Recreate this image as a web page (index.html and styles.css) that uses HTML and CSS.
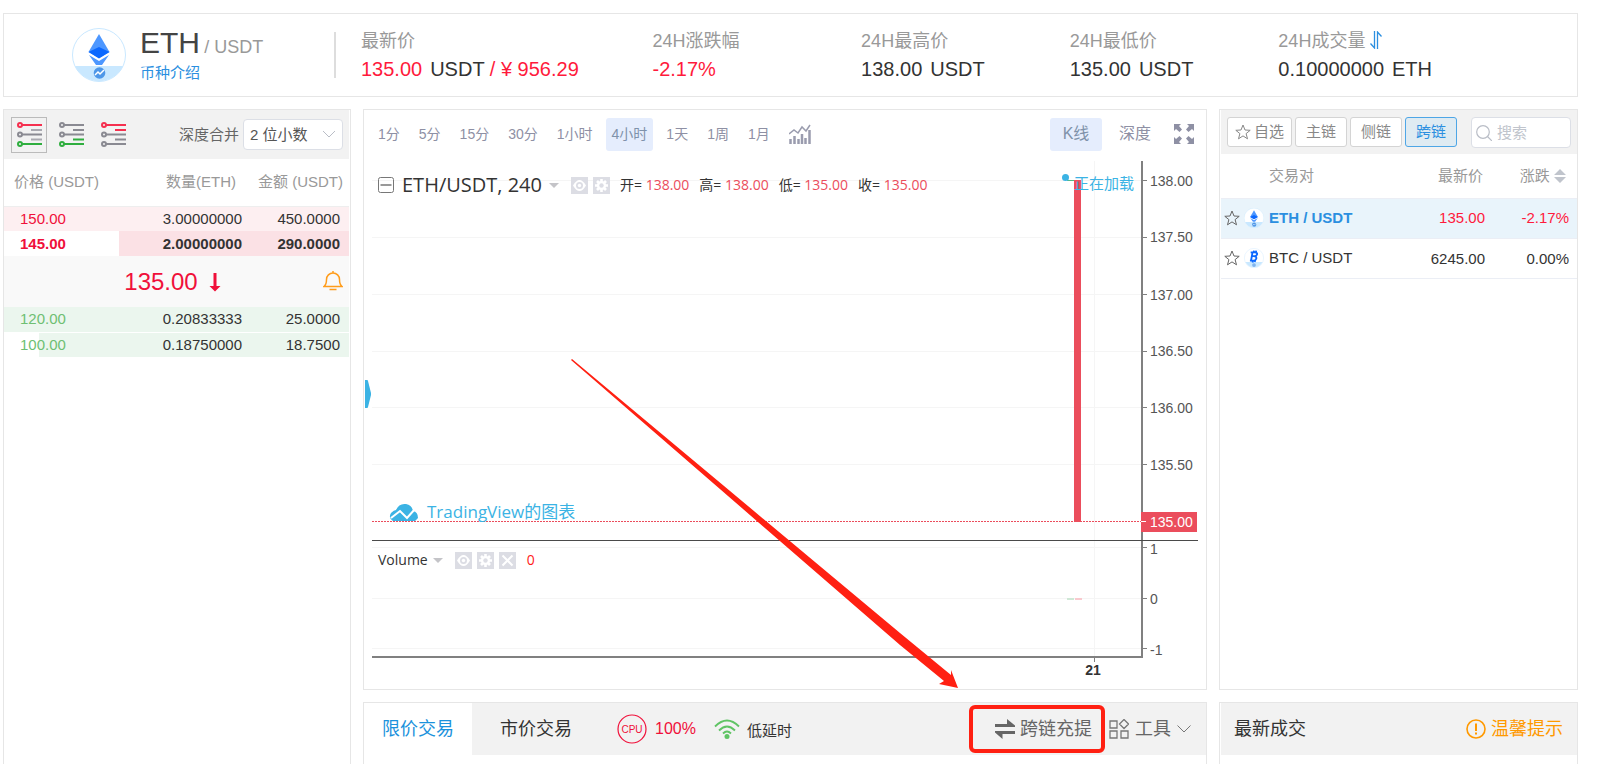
FILE: index.html
```html
<!DOCTYPE html>
<html lang="zh-CN">
<head>
    <meta charset="UTF-8">
    <meta name="viewport" content="width=device-width, initial-scale=1.0">
    <title>ETH / USDT</title>
    <link rel="stylesheet" href="styles.css">
</head>
<body>
    <!-- Shared shapes -->
    <svg class="sprite" aria-hidden="true">
        <symbol id="star" viewBox="0 0 16 16">
            <path d="M8 1l2 5 5.200.3-4.100 3.300 1.400 5.200L8 11.900l-4.500 2.900 1.400-5.200L.8 6.300 6 6z" fill="none" stroke="currentColor" stroke-linejoin="round"/>
        </symbol>
        <symbol id="eth" viewBox="0 0 54 54">
            <circle cx="27" cy="27" r="26.500" fill="#fff"/>
            <path d="M3 38h48a26.500 26.500 0 0 1-48 0z" fill="#c9e8ff"/>
            <circle cx="27" cy="27" r="26.500" fill="none" stroke="#c9e8ff"/>
            <path d="M27 6l10.500 18L27 30 16.500 24z" fill="#4d97ff"/>
            <path d="M27 19l10.500 5L27 30.500 16.500 24z" fill="#0b68ff"/>
            <path d="M17 27l10 6 10-6-7 10h-6z" fill="#4d97ff"/>
            <circle cx="27.500" cy="45" r="5.800" fill="#4e97e8"/>
            <path d="M23 47l3-3 2 2 4-4" fill="none" stroke="#fff" stroke-width="1.500"/>
        </symbol>
        <symbol id="btc" viewBox="0 0 54 54">
            <circle cx="27" cy="27" r="26" fill="#fff"/>
            <path d="M3 38h48a26.500 26.500 0 0 1-48 0z" fill="#c9e8ff"/>
            <circle cx="27" cy="27" r="26" fill="none" stroke="#e2f2ff" stroke-width="2"/>
            <path d="M23 12l-4 22M18 12h12q7 1 5 6t-8 4q8 1 6 7t-9 5H16M21 22h9M27 7l-1 5M33 7l-1 5M24 34l-1 5M30 34l-1 4" fill="none" stroke="#0b68ff" stroke-width="5"/>
            <circle cx="27" cy="46" r="5" fill="#7fb4ee"/>
        </symbol>
        <symbol id="eye" viewBox="0 0 17 17">
            <path d="M0 0h17v17H0z" fill="#dcdde4"/>
            <path d="M2 8.500q6.500-11 13 0q-6.500 11-13 0z" fill="#fff"/>
            <circle cx="8.500" cy="8.500" r="3.500" fill="#dcdde4"/>
            <circle cx="8.500" cy="8.500" r="1.700" fill="#fff"/>
        </symbol>
        <symbol id="gear" viewBox="0 0 17 17">
            <path d="M0 0h17v17H0z" fill="#dcdde4"/>
            <path d="M8.500 2v13M2 8.500h13M4 4l9 9M13 4l-9 9" stroke="#fff" stroke-width="2.600"/>
            <circle cx="8.500" cy="8.500" r="4.600" fill="#fff"/>
            <circle cx="8.500" cy="8.500" r="2.200" fill="#dcdde4"/>
        </symbol>
        <symbol id="cross" viewBox="0 0 17 17">
            <path d="M0 0h17v17H0z" fill="#dcdde4"/>
            <path d="M3.500 3.500l10 10M13.500 3.500l-10 10" stroke="#fff" stroke-width="2"/>
        </symbol>
    </svg>

    <div class="app">
        <header class="summary">
            <div class="coin">
                <svg class="coin-logo"><use href="#eth"/></svg>
                <div class="coin-text">
                    <h1 class="coin-name">ETH <small>/ USDT</small></h1>
                    <a class="coin-link" href="#">币种介绍</a>
                </div>
            </div>
            <dl class="stats">
                <div>
                    <dt>最新价</dt>
                    <dd><span class="red">135.00</span><span class="unit">USDT</span> <span class="red">/ ¥ 956.29</span></dd>
                </div>
                <div>
                    <dt>24H涨跌幅</dt>
                    <dd class="red">-2.17%</dd>
                </div>
                <div>
                    <dt>24H最高价</dt>
                    <dd>138.00<span class="unit">USDT</span></dd>
                </div>
                <div>
                    <dt>24H最低价</dt>
                    <dd>135.00<span class="unit">USDT</span></dd>
                </div>
                <div>
                    <dt>24H成交量
                        <svg class="swap-v" viewBox="0 0 12 18"><path d="M4.500 0v17L.5 12.500M7.500 18V1l4 4.500" fill="none" stroke="#2b8fe0" stroke-width="1.300"/></svg>
                    </dt>
                    <dd>0.10000000<span class="unit">ETH</span></dd>
                </div>
            </dl>
        </header>

        <main class="board">
            <section class="panel book">
                <div class="book-bar">
                    <button class="view active" aria-label="买卖盘">
                        <svg viewBox="0 0 25 25" fill="none" stroke-width="2">
                            <g stroke="#f5304f"><circle cx="3" cy="3" r="2"/><path d="M5 3h20"/></g>
                            <g stroke="#8a8a92"><circle cx="3" cy="12.500" r="2"/><path d="M5 12.500h20"/></g>
                            <path d="M14 8h11M14 17.500h11" stroke="#a9a9b0"/>
                            <g stroke="#2fae3f"><circle cx="3" cy="22" r="2"/><path d="M5 22h20"/></g>
                        </svg>
                    </button>
                    <button class="view" aria-label="买盘">
                        <svg viewBox="0 0 25 25" fill="none" stroke-width="2">
                            <g stroke="#8a8a92"><circle cx="3" cy="3" r="2"/><path d="M5 3h20M14 8h11"/><circle cx="3" cy="12.500" r="2"/><path d="M5 12.500h20"/></g>
                            <g stroke="#2fae3f"><circle cx="3" cy="22" r="2"/><path d="M5 22h20M14 17.500h11"/></g>
                        </svg>
                    </button>
                    <button class="view" aria-label="卖盘">
                        <svg viewBox="0 0 25 25" fill="none" stroke-width="2">
                            <g stroke="#f5304f"><circle cx="3" cy="3" r="2"/><path d="M5 3h20M14 8h11"/></g>
                            <g stroke="#8a8a92"><circle cx="3" cy="12.500" r="2"/><path d="M5 12.500h20M14 17.500h11"/><circle cx="3" cy="22" r="2"/><path d="M5 22h20"/></g>
                        </svg>
                    </button>
                    <label class="merge-label" for="merge">深度合并</label>
                    <div class="select-wrap">
                        <select id="merge">
                            <option>2 位小数</option>
                            <option>1 位小数</option>
                        </select>
                        <svg viewBox="0 0 12 8"><path d="M0 1l6 6 6-6" fill="none" stroke="#b9bdc6"/></svg>
                    </div>
                </div>
                <table class="orders">
                    <thead>
                        <tr><th>价格 (USDT)</th><th>数量(ETH)</th><th>金额 (USDT)</th></tr>
                    </thead>
                    <tbody class="asks">
                        <tr style="--depth: 100%"><td>150.00</td><td>3.00000000</td><td>450.0000</td></tr>
                        <tr class="mine" style="--depth: 66.700%"><td>145.00</td><td>2.00000000</td><td>290.0000</td></tr>
                    </tbody>
                </table>
                <div class="last">
                    <span>135.00</span>
                    <svg class="last-arrow" viewBox="0 0 12 20"><path d="M4.500 1h3v13h4L6 19.500.5 14h4z" fill="#f0103a"/></svg>
                    <button class="bell" aria-label="价格提醒">
                        <svg viewBox="0 0 20 20" fill="none" stroke="#ff9c1a" stroke-width="1.500"><path d="M1 15.500q2.500-2 2.500-7a6.500 6.500 0 0 1 13 0q0 5 2.500 7zM6.500 18.500h7M10 0v2"/></svg>
                    </button>
                </div>
                <table class="orders">
                    <tbody class="bids">
                        <tr style="--depth: 100%"><td>120.00</td><td>0.20833333</td><td>25.0000</td></tr>
                        <tr style="--depth: 90%"><td>100.00</td><td>0.18750000</td><td>18.7500</td></tr>
                    </tbody>
                </table>
            </section>

            <section class="panel chart">
                <div class="chart-bar">
                    <button>1分</button>
                    <button>5分</button>
                    <button>15分</button>
                    <button>30分</button>
                    <button>1小时</button>
                    <button class="active">4小时</button>
                    <button>1天</button>
                    <button>1周</button>
                    <button>1月</button>
                    <button aria-label="指标">
                        <svg class="indicator" viewBox="0 0 22 20"><path d="M1.500 20v-5M5.500 20v-8M9.500 20v-5M13 20V10M16.500 20v-6M20.500 20V6" stroke="#9a9cae" stroke-width="2.500"/><path d="M0 10l5-4 4 3 4-6 4 4 4-6" fill="none" stroke="#9a9cae" stroke-width="1.500"/></svg>
                    </button>
                    <button class="kind active first">K线</button>
                    <button class="kind">深度</button>
                    <button class="full" aria-label="全屏">
                        <svg viewBox="0 0 20 20" fill="#8e90a4"><path d="M0 0h7L5 2l3 3.500L5.500 8 2 5 0 7zM20 0v7l-2-2-3.500 3L12 5.500 15 2l-2-2zM0 20v-7l2 2 3.500-3L8 14.500 5 18l2 2zM20 20h-7l2-2-3-3.500 2.500-2.500 3.500 3 2-2z"/></svg>
                    </button>
                </div>
                <div class="plot">
                    <svg class="plot-svg" viewBox="0 0 842 531">
                        <path class="grid" d="M8 22.500h769M8 79.500h769M8 136.500h769M8 193.500h769M8 249.500h769M8 306.500h769M8 389.500h769M8 440.500h769M8 490.500h769M730.500 3v495"/>
                        <path class="grid-last" d="M8 363.500h769"/>
                        <path d="M1 222h2q1 0 1 1l3 12v2l-3 12q0 1-1 1H1z" fill="#3bb3e4"/>
                        <path d="M703 22.500h8" stroke="#53b987"/>
                        <path d="M710 22h7v342h-7z" fill="#eb4d5c"/>
                        <path d="M703 440h7v2h-7z" fill="#cfe8d6"/>
                        <path d="M711 440h7v2h-7z" fill="#f9c9ce"/>
                        <circle cx="701.500" cy="19.500" r="3.500" fill="#3bb3e4"/>
                        <text class="loading" x="710" y="31">正在加载</text>
                        <path class="axis" d="M778 3v497M8 499h771"/>
                        <path class="marks" d="M778 22.500h5M778 79.500h5M778 136.500h5M778 193.500h5M778 249.500h5M778 306.500h5M778 389.500h5M778 440.500h5M778 490.500h5M730.500 499v5"/>
                        <path d="M8 382.500h826" stroke="#4a4a4a"/>
                        <path d="M777 354h56v20h-56z" fill="#eb4d5c"/>
                        <path d="M777 363.500h5" stroke="#fff"/>
                        <g class="ticks">
                            <text x="786" y="28">138.00</text>
                            <text x="786" y="84">137.50</text>
                            <text x="786" y="142">137.00</text>
                            <text x="786" y="198">136.50</text>
                            <text x="786" y="255">136.00</text>
                            <text x="786" y="312">135.50</text>
                            <text x="786" y="369" fill="#fff">135.00</text>
                            <text x="786" y="396">1</text>
                            <text x="786" y="446">0</text>
                            <text x="786" y="497">-1</text>
                            <text class="day" x="729" y="517">21</text>
                        </g>
                        <!-- TradingView mark -->
                        <path d="M29 363q-5-3-2-8 3-3 5-3 3-7 10-6 6 1 7 7 5 1 5 7l-3 3z" fill="#3bb3e4"/>
                        <path d="M27 360l9-7 7 7 8-9" fill="none" stroke="#fff" stroke-width="2"/>
                        <text class="brand" x="63" y="360">TradingView的图表</text>
                    </svg>
                    <div class="legend">
                        <svg class="collapse" viewBox="0 0 16 16"><rect x=".5" y=".5" width="15" height="15" rx="2" fill="none" stroke="#777"/><path d="M2.500 8h11" stroke="#999" stroke-width="2"/></svg>
                        <strong>ETH/USDT, 240</strong>
                        <i class="caret"></i>
                        <svg class="tool"><use href="#eye"/></svg>
                        <svg class="tool"><use href="#gear"/></svg>
                        <span class="ohlc">开= <b>138.00</b></span>
                        <span class="ohlc">高= <b>138.00</b></span>
                        <span class="ohlc">低= <b>135.00</b></span>
                        <span class="ohlc">收= <b>135.00</b></span>
                    </div>
                    <div class="legend volume">
                        <span>Volume</span>
                        <i class="caret"></i>
                        <svg class="tool"><use href="#eye"/></svg>
                        <svg class="tool"><use href="#gear"/></svg>
                        <svg class="tool"><use href="#cross"/></svg>
                        <span class="zero">0</span>
                    </div>
                </div>
            </section>

            <section class="panel market">
                <div class="market-bar">
                    <button class="fav"><svg><use href="#star"/></svg>自选</button>
                    <button>主链</button>
                    <button>侧链</button>
                    <button class="active">跨链</button>
                    <div class="search">
                        <svg viewBox="0 0 16 16" fill="none" stroke="#b9bdc6" stroke-width="1.200"><circle cx="7" cy="7" r="6.300"/><path d="M11.500 11.500L16 16"/></svg>
                        <input type="text" aria-label="搜索" placeholder="搜索">
                    </div>
                </div>
                <table class="pairs">
                    <thead>
                        <tr>
                            <th>交易对</th>
                            <th>最新价</th>
                            <th>涨跌 <svg class="sort" viewBox="0 0 12 14"><path d="M6 0l6 6H0zM6 14l6-6H0z" fill="#c0c4cc"/></svg></th>
                        </tr>
                    </thead>
                    <tbody>
                        <tr class="current">
                            <td><svg class="star"><use href="#star"/></svg><svg class="mini"><use href="#eth"/></svg><a href="#">ETH / USDT</a></td>
                            <td class="red">135.00</td>
                            <td class="red">-2.17%</td>
                        </tr>
                        <tr>
                            <td><svg class="star"><use href="#star"/></svg><svg class="mini"><use href="#btc"/></svg><a href="#">BTC / USDT</a></td>
                            <td>6245.00</td>
                            <td>0.00%</td>
                        </tr>
                    </tbody>
                </table>
            </section>

            <section class="panel open trade">
                <div class="foot-bar">
                    <button class="tab active">限价交易</button>
                    <button class="tab">市价交易</button>
                    <svg class="cpu" viewBox="0 0 30 30"><circle cx="15" cy="15" r="14" fill="none" stroke="#f0103a" stroke-width="1.200"/><text x="15" y="19">CPU</text></svg>
                    <span class="load">100%</span>
                    <svg class="wifi" viewBox="0 0 26 20"><path d="M1 7.500q12-12 24 0M5 11.500q8-8 16 0M9 14.500q4-4 8 0" fill="none" stroke="#5fc464" stroke-width="1.800"/><circle cx="13" cy="17.500" r="2.500" fill="#5fc464"/></svg>
                    <span class="delay">低延时</span>
                    <button class="cross-chain">
                        <svg viewBox="0 0 20 20" fill="#666"><path d="M0 5h12V0l8 6.500V8H0zM20 12H0v1.500L7.500 20v-5H20z"/></svg>跨链充提
                    </button>
                    <button class="tools">
                        <svg class="tools-icon" viewBox="0 0 20 20" fill="none" stroke="#777" stroke-width="1.300"><path d="M1 2h7v7H1zM1 12h7v7H1zM12 12h7v7h-7zM15 .5l4.500 4.500L15 9.500 10.500 5z"/></svg>工具
                        <svg class="chevron" viewBox="0 0 14 8"><path d="M.5.5L7 7 13.500.5" fill="none" stroke="#777"/></svg>
                    </button>
                </div>
            </section>

            <section class="panel open deals">
                <div class="foot-bar">
                    <h2>最新成交</h2>
                    <a class="tip" href="#">
                        <svg viewBox="0 0 20 20"><circle cx="10" cy="10" r="9" fill="none" stroke="#ff9900" stroke-width="1.600"/><path d="M10 4.500v7.500M10 13.500v2" stroke="#ff9900" stroke-width="2"/></svg>温馨提示
                    </a>
                </div>
            </section>
        </main>

        <!-- Pointer to the cross-chain button -->
        <svg class="pointer" viewBox="0 0 388 330"><path d="M1 0L329 274 380 316 380 311 387 329 368 325 373 322 329 286 0 1z" fill="#ff2012"/></svg>
    </div>
</body>
</html>
```
FILE: styles.css
```css
* {
    box-sizing: border-box;
}

body {
    margin: 0;
    background: #fff;
    color: #333;
    font-family: "Liberation Sans", "Noto Sans CJK SC", sans-serif;
    font-size: 15px;
    line-height: 20px;
}

button, input, select {
    font: inherit;
    color: inherit;
    margin: 0;
    padding: 0;
    border: 0;
    background: none;
}

button {
    cursor: pointer;
}

a {
    color: inherit;
    text-decoration: none;
}

svg {
    flex: none;
}

.sprite {
    display: none;
}

.red {
    color: #ff1a3c;
}

.app {
    position: relative;
    display: flex;
    flex-direction: column;
    gap: 12px;
    min-height: 100vh;
    padding: 13px 44px 0 3px;
}

/* Header */
.summary {
    display: flex;
    align-items: center;
    height: 84px;
    padding: 0 90px 0 68px;
    border: 1px solid #e6e6e6;
}

.coin {
    display: flex;
    gap: 14px;
    width: 264px;
    height: 46px;
    align-items: center;
    border-right: 2px solid #ddd;
}

.coin-logo {
    width: 54px;
    height: 54px;
}

.coin-name {
    margin: 0;
    font-size: 30px;
    font-weight: normal;
    line-height: 32px;
    color: #444;
}

    .coin-name small {
        margin-left: -4px;
        font-size: 18px;
        color: #999;
    }

.coin-link {
    display: block;
    color: #2b8fe0;
}

.stats {
    flex: 1;
    display: grid;
    grid-template-columns: 292fr 209fr 209fr 209fr 209fr;
    margin: 0 0 0 25px;
    white-space: nowrap;
}

    .stats dt {
        font-size: 18px;
        line-height: 28px;
        color: #999;
    }

    .stats dd {
        margin: 0;
        font-size: 20px;
        line-height: 28px;
    }

.unit {
    margin-left: 8px;
}

.swap-v {
    width: 12px;
    height: 18px;
    vertical-align: -2px;
}

/* Panels */
.board {
    flex: 1;
    display: grid;
    grid-template-columns: 348px 1fr 359px;
    grid-template-rows: auto 1fr;
    gap: 12px;
}

.panel {
    border: 1px solid #e6e6e6;
    min-width: 0;
}

.book {
    grid-row: span 2;
    border-bottom: 0;
    padding-right: 1px;
}

.open {
    border-bottom: 0;
}

/* Order book */
.book-bar {
    display: flex;
    align-items: center;
    height: 49px;
    padding: 0 6px 0 7px;
    background: #f2f2f2;
}

.view {
    display: flex;
    align-items: center;
    justify-content: center;
    width: 36px;
    height: 36px;
    margin-right: 6px;
    border: 1px solid transparent;
}

    .view.active {
        border-color: #bbb;
    }

    .view svg {
        width: 25px;
        height: 25px;
    }

.merge-label {
    margin-left: auto;
    margin-right: 4px;
    color: #666;
}

.select-wrap {
    position: relative;
}

    .select-wrap select {
        display: block;
        width: 100px;
        height: 31px;
        padding: 0 6px;
        appearance: none;
        background: #fff;
        border: 1px solid #dcdfe6;
        border-radius: 4px;
        color: #555;
    }

    .select-wrap svg {
        position: absolute;
        right: 8px;
        top: 11px;
        width: 12px;
        height: 8px;
        pointer-events: none;
    }

.orders {
    width: 100%;
    table-layout: fixed;
    border-collapse: collapse;
}

    .orders th {
        height: 47px;
        padding: 0 6px 0 10px;
        border-bottom: 1px solid #eee;
        font-weight: normal;
        text-align: right;
        white-space: nowrap;
        color: #999;
    }

    .orders td {
        height: 25px;
        padding: 0 9px 0 16px;
        text-align: right;
    }

    .orders th:first-child, .orders td:first-child {
        text-align: left;
    }

    .orders th:nth-child(2) {
        padding-right: 6px;
    }

    .orders td:nth-child(2) {
        padding: 0;
    }

    .orders th:first-child, .orders td:first-child, .orders th:last-child, .orders td:last-child {
        width: 107px;
    }

    .orders tr {
        --bar: #fdeff1;
    }

    .orders tbody tr {
        background: linear-gradient(to left, var(--bar) var(--depth), transparent var(--depth));
    }

    .orders .mine {
        --bar: #fbe1e5;
        font-weight: bold;
    }

    .orders .bids tr {
        --bar: #ebf6ee;
    }

        .orders .bids tr + tr {
            border-top: 1px solid #fff;
        }

    .asks td:first-child {
        color: #f0103a;
    }

    .bids td:first-child {
        color: #6fbf73;
    }

.last {
    position: relative;
    display: flex;
    align-items: center;
    justify-content: center;
    gap: 11px;
    height: 51px;
    padding-right: 8px;
    background: #f9f9f9;
    font-size: 24px;
    color: #f0103a;
}

.last-arrow {
    width: 12px;
    height: 20px;
}

.bell {
    position: absolute;
    right: 6px;
    top: 15px;
}

    .bell svg {
        display: block;
        width: 20px;
        height: 20px;
    }

/* Chart */
.chart-bar {
    display: flex;
    align-items: center;
    gap: 7px;
    height: 48px;
    padding: 0 6px 0 8px;
    color: #8e90a4;
}

    .chart-bar button {
        height: 33px;
        padding: 0 6px;
        border-radius: 3px;
        font-size: 14px;
    }

    .chart-bar .active {
        background: #e5edfd;
        color: #7f92aa;
    }

    .chart-bar .kind {
        width: 52px;
        font-size: 16px;
    }

    .chart-bar .first {
        margin-left: auto;
    }

    .chart-bar svg {
        display: block;
    }

.indicator {
    width: 22px;
    height: 20px;
}

.full svg {
    width: 20px;
    height: 20px;
}

.plot {
    position: relative;
}

.plot-svg {
    display: block;
    width: 100%;
}

.grid {
    fill: none;
    stroke: #f5f5f5;
}

.grid-last {
    stroke: #eb4d5c;
    stroke-dasharray: 2 1;
}

.axis {
    fill: none;
    stroke: #808080;
    stroke-width: 2;
}

.marks {
    fill: none;
    stroke: #808080;
}

.ticks {
    fill: #555;
    font-size: 14px;
}

.day {
    fill: #333;
    font-weight: bold;
    text-anchor: middle;
}

.loading {
    fill: #3bb3e4;
    font-size: 15px;
}

.brand {
    fill: #3bb3e4;
    font-family: "Open Sans", "Noto Sans CJK SC", sans-serif;
    font-size: 17px;
}

.legend {
    position: absolute;
    left: 14px;
    top: 15px;
    display: flex;
    align-items: center;
    height: 24px;
    font-family: "Open Sans", "Noto Sans CJK SC", sans-serif;
    font-size: 14px;
    white-space: nowrap;
}

    .legend strong {
        margin-left: 8px;
        font-size: 20px;
        font-weight: normal;
    }

.collapse {
    width: 16px;
    height: 16px;
}

.caret {
    margin: 0 12px 0 7px;
    border: 5px solid transparent;
    border-top-color: #c4c4c8;
    border-bottom: 0;
}

.tool {
    width: 17px;
    height: 17px;
    margin-right: 5px;
}

.ohlc {
    margin-left: 5px;
    margin-right: 5px;
}

    .ohlc b {
        font-weight: normal;
        color: #eb4d5c;
    }

.volume {
    top: 390px;
}

    .volume .caret {
        margin: 0 12px 0 5px;
    }

.zero {
    margin-left: 6px;
    color: #ff1a1a;
}

/* Pairs */
.market {
    padding-left: 1px;
}

.market-bar {
    display: flex;
    gap: 3px;
    height: 44px;
    padding: 7px 6px;
    background: #f2f2f2;
    color: #888;
}

    .market-bar button {
        width: 52px;
        height: 30px;
        background: #fff;
        border: 1px solid #d4d4d4;
        border-radius: 3px;
    }

    .market-bar .fav {
        display: flex;
        align-items: center;
        justify-content: center;
        gap: 3px;
        width: 65px;
    }

        .market-bar .fav svg {
            width: 16px;
            height: 16px;
        }

    .market-bar .active {
        background: #dfebf2;
        border-color: #4ea6e6;
        color: #2b8fe0;
    }

.search {
    display: flex;
    align-items: center;
    gap: 5px;
    width: 100px;
    height: 31px;
    margin-left: auto;
    padding: 0 4px;
    background: #fff;
    border: 1px solid #dcdfe6;
    border-radius: 4px;
}

    .search svg {
        width: 16px;
        height: 16px;
    }

    .search input {
        width: 100%;
        min-width: 0;
    }

    .search input::placeholder {
        color: #c0c4cc;
    }

.pairs {
    width: 100%;
    table-layout: fixed;
    border-collapse: collapse;
}

    .pairs th, .pairs td {
        height: 40px;
        padding: 0;
        border-bottom: 1px solid #ebeef5;
        font-weight: normal;
        text-align: right;
    }

    .pairs th {
        height: 44px;
        padding-right: 2px;
        color: #999;
    }

    .pairs th:first-child {
        width: 160px;
        padding-left: 48px;
        text-align: left;
    }

    .pairs th:last-child {
        width: 92px;
        padding-right: 11px;
    }

    .pairs td:first-child {
        display: flex;
        align-items: center;
        gap: 4px;
        padding-left: 3px;
    }

    .pairs td:last-child {
        padding-right: 8px;
    }

.current {
    background: #e9f4fb;
}

    .current a {
        font-weight: bold;
        color: #2b8fe0;
    }

.star {
    width: 16px;
    height: 16px;
    color: #666;
}

.mini {
    width: 20px;
    height: 20px;
    margin-right: 1px;
}

.sort {
    width: 12px;
    height: 14px;
    vertical-align: -2px;
}

/* Bottom bars */
.foot-bar {
    display: flex;
    align-items: center;
    height: 52px;
    background: #f2f2f2;
    font-size: 18px;
    white-space: nowrap;
}

.tab {
    width: 128px;
    height: 52px;
}

    .tab.active {
        width: 108px;
        background: #fff;
        color: #1b92dc;
    }

.cpu {
    width: 30px;
    height: 30px;
    margin-left: 17px;
}

    .cpu text {
        fill: #f0103a;
        font-size: 10px;
        text-anchor: middle;
    }

.load {
    margin: 0 18px 0 8px;
    font-size: 16px;
    color: #f0103a;
}

.wifi {
    width: 26px;
    height: 20px;
    margin-right: 7px;
}

.delay {
    padding-top: 3px;
    font-size: 15px;
}

.cross-chain {
    display: flex;
    align-items: center;
    gap: 5px;
    height: 48px;
    margin-left: auto;
    padding: 0 9px 0 22px;
    border: 4px solid #ff2012;
    border-radius: 6px;
    color: #666;
}

    .cross-chain svg {
        width: 20px;
        height: 20px;
    }

.tools {
    display: flex;
    align-items: center;
    gap: 6px;
    margin: 0 15px 0 4px;
    color: #666;
}

.tools-icon {
    width: 20px;
    height: 20px;
}

.chevron {
    width: 14px;
    height: 8px;
}

.deals .foot-bar {
    justify-content: space-between;
    margin-left: 1px;
    padding: 0 14px 0 13px;
}

.deals h2 {
    margin: 0;
    font-size: 18px;
    font-weight: normal;
}

.tip {
    display: flex;
    align-items: center;
    gap: 5px;
    color: #ff9900;
}

    .tip svg {
        width: 20px;
        height: 20px;
    }

/* Free-floating arrow over the page */
.pointer {
    position: absolute;
    left: 571px;
    top: 359px;
    width: 388px;
    height: 330px;
    pointer-events: none;
}
```
